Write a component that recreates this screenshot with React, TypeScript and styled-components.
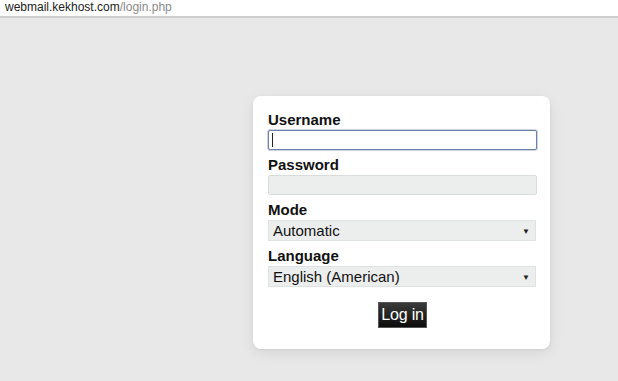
import React from "react";
import styled, { createGlobalStyle } from "styled-components";

const GlobalStyle = createGlobalStyle`
  html, body {
    margin: 0;
    padding: 0;
    background: #e8e8e8;
  }
  body {
    font-family: "Liberation Sans", Arial, sans-serif;
  }
`;

const Page = styled.div`
  width: 618px;
  height: 381px;
  display: flex;
  flex-direction: column;
  background: #e8e8e8;
  overflow: hidden;
`;

const AddressBar = styled.div`
  height: 16px;
  background: #ffffff;
  border-bottom: 2px solid #cfcfcf;
  padding-left: 5px;
  font-family: "Liberation Sans", Arial, sans-serif;
  font-size: 12px;
  line-height: 15px;
  color: #222222;
`;

const Path = styled.span`
  color: #8a8a8a;
`;

const Stage = styled.div`
  flex: 1;
  display: flex;
  justify-content: flex-end;
  padding: 78px 68px 0 0;
`;

const Card = styled.form`
  width: 297px;
  height: 253px;
  box-sizing: border-box;
  background: #ffffff;
  border-radius: 8px;
  box-shadow: 0 4px 14px rgba(0, 0, 0, 0.08), 0 1px 3px rgba(0, 0, 0, 0.06);
  padding: 14px 13px 0 15px;
  display: flex;
  flex-direction: column;
`;

const Field = styled.div`
  display: flex;
  flex-direction: column;
  margin-bottom: 5px;
`;

const Label = styled.label`
  font-size: 15px;
  font-weight: bold;
  color: #111111;
  line-height: 19px;
  height: 20px;
`;

const Input = styled.div<{ $focused?: boolean }>`
  height: 20px;
  box-sizing: border-box;
  width: 269px;
  border: 1px solid ${(p) => (p.$focused ? "#6c80aa" : "#d9dcdc")};
  border-radius: 2px;
  background: ${(p) => (p.$focused ? "#ffffff" : "#eceeee")};
  box-shadow: ${(p) => (p.$focused ? "0 0 0 1px rgba(108,128,170,0.35)" : "none")};
  position: relative;
`;

const Caret = styled.span`
  position: absolute;
  left: 3px;
  top: 2px;
  width: 1px;
  height: 14px;
  background: #222222;
`;

const Select = styled.div`
  height: 21px;
  width: 268px;
  box-sizing: border-box;
  border: 1px solid #dfe2e2;
  background: #eceeee;
  display: flex;
  align-items: center;
  justify-content: space-between;
  padding: 0 5px 0 4px;
  font-size: 15px;
  color: #111111;
`;

const Arrow = styled.span`
  font-size: 8px;
  color: #222222;
  margin-top: 1px;
`;

const Actions = styled.div`
  display: flex;
  justify-content: center;
  padding-top: 10px;
`;

const LoginButton = styled.button`
  height: 26px;
  padding: 0 2px;
  border: 1px solid #555555;
  background: linear-gradient(#3a3a3a, #0c0c0c);
  color: #ffffff;
  font-family: "Liberation Sans", Arial, sans-serif;
  font-size: 16px;
  letter-spacing: -0.2px;
  line-height: 22px;
  cursor: pointer;
`;

const App = () => {
  return (
    <Page>
      <GlobalStyle />
      <AddressBar>
        webmail.kekhost.com<Path>/login.php</Path>
      </AddressBar>
      <Stage>
        <Card onSubmit={(e) => e.preventDefault()}>
          <Field>
            <Label>Username</Label>
            <Input $focused>
              <Caret />
            </Input>
          </Field>
          <Field>
            <Label>Password</Label>
            <Input />
          </Field>
          <Field>
            <Label>Mode</Label>
            <Select>
              Automatic<Arrow>▼</Arrow>
            </Select>
          </Field>
          <Field>
            <Label>Language</Label>
            <Select>
              English (American)<Arrow>▼</Arrow>
            </Select>
          </Field>
          <Actions>
            <LoginButton type="submit">Log in</LoginButton>
          </Actions>
        </Card>
      </Stage>
    </Page>
  );
};

export default App;
